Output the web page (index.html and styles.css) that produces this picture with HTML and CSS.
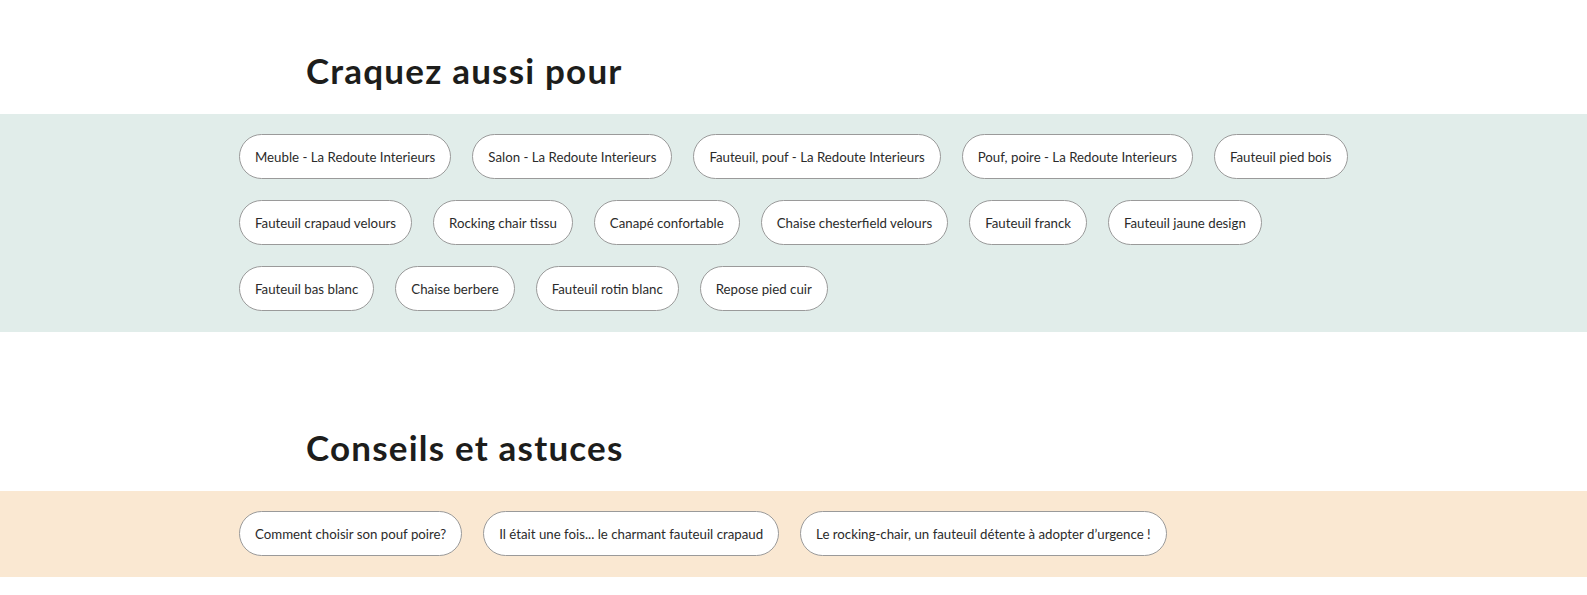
FILE: index.html
```html
<!DOCTYPE html>
<html lang="fr">
<head>
<meta charset="utf-8">
<title>Craquez aussi pour</title>
<link rel="stylesheet" href="styles.css">
</head>
<body>
<section class="block block-first">
  <h2 class="block-title">Craquez aussi pour</h2>
  <div class="band band-green">
    <ul class="pills">
      <li><a class="pill" href="#">Meuble - La Redoute Interieurs</a></li>
      <li><a class="pill" href="#">Salon - La Redoute Interieurs</a></li>
      <li><a class="pill" href="#">Fauteuil, pouf - La Redoute Interieurs</a></li>
      <li><a class="pill" href="#">Pouf, poire - La Redoute Interieurs</a></li>
      <li><a class="pill" href="#">Fauteuil pied bois</a></li>
      <li><a class="pill" href="#">Fauteuil crapaud velours</a></li>
      <li><a class="pill" href="#">Rocking chair tissu</a></li>
      <li><a class="pill" href="#">Canapé confortable</a></li>
      <li><a class="pill" href="#">Chaise chesterfield velours</a></li>
      <li><a class="pill" href="#">Fauteuil franck</a></li>
      <li><a class="pill" href="#">Fauteuil jaune design</a></li>
      <li><a class="pill" href="#">Fauteuil bas blanc</a></li>
      <li><a class="pill" href="#">Chaise berbere</a></li>
      <li><a class="pill" href="#">Fauteuil rotin blanc</a></li>
      <li><a class="pill" href="#">Repose pied cuir</a></li>
    </ul>
  </div>
</section>
<section class="block block-second">
  <h2 class="block-title">Conseils et astuces</h2>
  <div class="band band-beige">
    <ul class="pills">
      <li><a class="pill" href="#">Comment choisir son pouf poire?</a></li>
      <li><a class="pill" href="#">Il était une fois... le charmant fauteuil crapaud</a></li>
      <li><a class="pill" href="#">Le rocking-chair, un fauteuil détente à adopter d’urgence !</a></li>
    </ul>
  </div>
</section>
</body>
</html>
```

FILE: styles.css
```css
* { box-sizing: border-box; }

html, body {
  margin: 0;
  padding: 0;
  background: #ffffff;
}

body {
  font-family: Lato, "Open Sans", "Liberation Sans", sans-serif;
  color: #1d1d1b;
  overflow: hidden;
}

.block-first {
  padding-top: 50px;
}

.block-second {
  padding-top: 95px;
}

.block-title {
  margin: 0 0 24px 306px;
  font-size: 35px;
  line-height: 40px;
  font-weight: 700;
  letter-spacing: 1.2px;
  color: #1d1d1b;
}

.band {
  padding: 20px 0 0 239px;
}

.band-green {
  background: #e1edea;
}

.band-beige {
  background: #fae8d2;
}

.pills {
  list-style: none;
  margin: 0;
  padding: 0;
  width: 1161px;
  display: flex;
  flex-wrap: wrap;
}

.pills li {
  margin: 0 21px 21px 0;
}

.pill {
  display: inline-flex;
  align-items: center;
  height: 45px;
  padding: 0 15px;
  border: 1px solid #9a9a9a;
  border-radius: 23px;
  background: #ffffff;
  color: #2b2b2b;
  font-size: 13.25px;
  text-decoration: none;
  white-space: nowrap;
}
```
